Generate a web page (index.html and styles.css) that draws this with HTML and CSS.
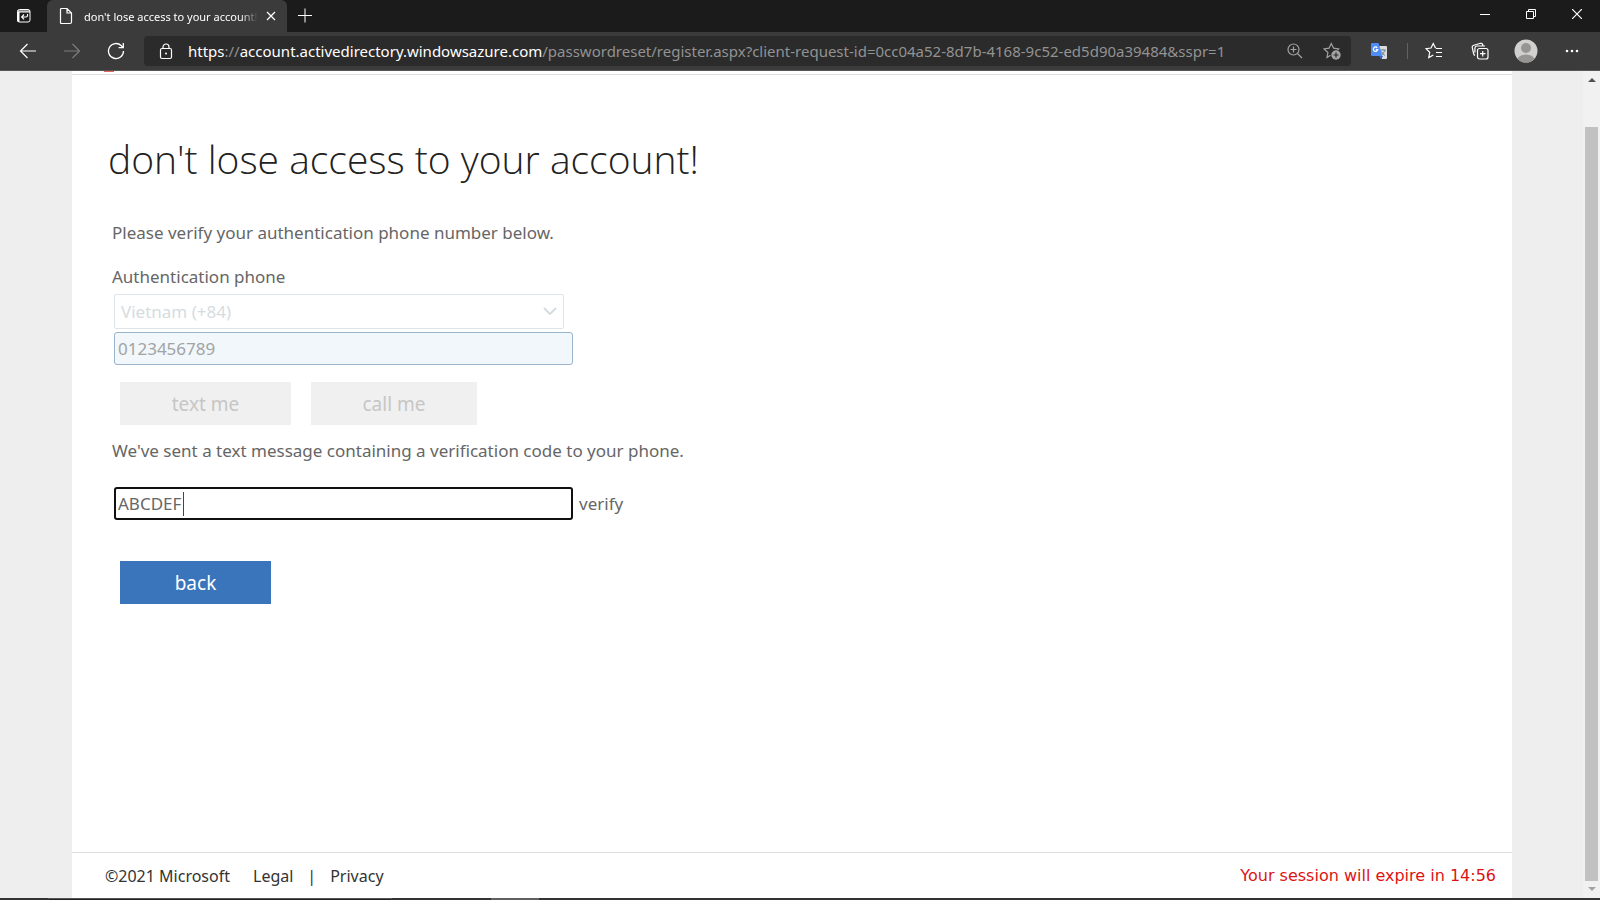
FILE: index.html
```html
<!DOCTYPE html>
<html lang="en">

<head>
    <meta charset="utf-8">
    <title>don't lose access to your account!</title>
    <meta name="viewport" content="width=device-width, initial-scale=1">
    <link rel="stylesheet" href="styles.css">
</head>

<body>
<div class="tabstrip">
    <button class="tab-menu" aria-label="Tab actions">
        <svg width="16" height="16" viewBox="0 0 16 16" fill="none" stroke="#fff">
            <rect x="1.5" y="1.5" width="12.5" height="12.5" rx="2"/>
            <path d="M1.5 3h12.500M1.500 4h12.500" stroke-width="1"/>
            <path d="M2.500 4v10" stroke-width="2"/>
            <path d="M11.500 6v1.500q0 1.500-1.500 1.500H6M8 6.500L5.700 9 8 11.300" stroke-width="1.200"/>
        </svg>
    </button>
    <div class="tab">
        <svg width="14" height="18" viewBox="0 0 14 18" fill="none" stroke="#fff" stroke-width="1.200">
            <path d="M2.500 1.500h5.500l4.500 4.500v9q0 1.500-1.500 1.500H2.500q-1 0-1-1v-13q0-1 1-1zM8 1.500V6h4.500"/>
        </svg>
        <span class="tab-title">don't lose access to your account!</span>
        <button class="tab-close" aria-label="Close tab">
            <svg width="10" height="10" viewBox="0 0 10 10" stroke="#fff" stroke-width="1.300">
                <path d="M1 1l8 8M9 1L1 9"/>
            </svg>
        </button>
    </div>
    <button class="new-tab" aria-label="New tab">
        <svg width="16" height="16" viewBox="0 0 16 16" stroke="#fff">
            <path d="M1 7.500h14M8 .5v14"/>
        </svg>
    </button>
    <div class="window-buttons">
        <button aria-label="Minimize">
            <svg width="10" height="10" viewBox="0 0 10 10" stroke="#fff"><path d="M0 5.500h10"/></svg>
        </button>
        <button aria-label="Restore">
            <svg width="10" height="10" viewBox="0 0 10 10" fill="none" stroke="#fff">
                <path d="M.5 2.500h7v7h-7zM2.500 2.500v-2h7v7h-2"/>
            </svg>
        </button>
        <button aria-label="Close">
            <svg width="10" height="10" viewBox="0 0 10 10" stroke="#fff" stroke-width="1.200"><path d="M0 0l10 10M10 0L0 10"/></svg>
        </button>
    </div>
</div>

<div class="toolbar">
    <div class="nav-buttons">
        <button aria-label="Back">
            <svg width="18" height="16" viewBox="0 0 18 16" fill="none" stroke="#fff" stroke-width="1.200">
                <path d="M17 8H1.500M8.500 1l-7 7 7 7"/>
            </svg>
        </button>
        <button aria-label="Forward" disabled>
            <svg width="18" height="16" viewBox="0 0 18 16" fill="none" stroke="#7d7d7d" stroke-width="1.200">
                <path d="M1 8h15.500M9.500 1l7 7-7 7"/>
            </svg>
        </button>
        <button aria-label="Refresh">
            <svg width="18" height="18" viewBox="0 0 18 18" fill="none" stroke="#fff" stroke-width="1.300">
                <path d="M16.500 9a7.500 7.500 0 1 1-2.200-5.300L16 5.400M16.300 1v4.700h-4.700"/>
            </svg>
        </button>
    </div>
    <div class="address">
        <svg width="14" height="17" viewBox="0 0 14 17" fill="none" stroke="#fff" stroke-width="1.200">
            <rect x="1.500" y="5.500" width="11" height="10" rx="1.500"/>
            <path d="M4 5.500V4a3 3 0 0 1 6 0v1.500"/>
            <circle cx="7" cy="10.500" r="1" fill="#fff" stroke="none"/>
        </svg>
        <span class="url"><b>https</b>://<b>account.activedirectory.windowsazure.com</b>/passwordreset/register.aspx?client-request-id=0cc04a52-8d7b-4168-9c52-ed5d90a39484&amp;sspr=1</span>
        <button aria-label="Zoom">
            <svg width="16" height="16" viewBox="0 0 16 16" fill="none" stroke="#a3a3a3" stroke-width="1.200">
                <circle cx="6.500" cy="6.500" r="5.500"/>
                <path d="M10.500 10.500L15 15M3.500 6.500h6M6.500 3.500v6"/>
            </svg>
        </button>
        <button aria-label="Add this page to favorites">
            <svg width="18" height="18" viewBox="0 0 18 18" fill="none" stroke="#a3a3a3" stroke-width="1.200">
                <path d="M7.500 13.300L4 15.500l.9-5L1 6.900l5-.7L8.300 1.500l2.300 4.700 5 .7-1.100 1.100"/>
                <circle cx="13" cy="13" r="4.700" fill="#a3a3a3" stroke="none"/>
                <path d="M10.500 13h5M13 10.500v5" stroke="#2b2b2b"/>
            </svg>
        </button>
    </div>
    <div class="extensions">
        <button aria-label="Translate">
            <svg width="16" height="17" viewBox="0 0 16 17">
                <path d="M6 3h9q1 0 1 1v11q0 1-1 1h-4z" fill="#dcdcdc"/>
                <path d="M9 7h6M12 6v1M14 7q-1 4-4.500 5.500M10.500 8.500q1 2.500 3.500 4" fill="none" stroke="#6f8790"/>
                <path d="M8 13h4l-2 3.500z" fill="#3c62bd"/>
                <path d="M1 0h6.500l4 13H1q-1 0-1-1V1q0-1 1-1z" fill="#4f8df5"/>
                <path d="M6.300 4.800A2.200 2.200 0 1 0 6.700 6.700H4.800" fill="none" stroke="#fff" stroke-width="1.200"/>
            </svg>
        </button>
        <span class="separator"></span>
        <button aria-label="Favorites">
            <svg width="18" height="18" viewBox="0 0 18 18" fill="none" stroke="#fff" stroke-width="1.200">
                <path d="M11 5.800L10.300 5.600 8.200 1.500 6 6l-5 .7 3.700 3.600-.9 5.200L8.300 13M11 6.500h6M11 10.500h6M11 14.500h6"/>
            </svg>
        </button>
        <button aria-label="Collections">
            <svg width="18" height="18" viewBox="0 0 18 18" fill="none" stroke="#fff" stroke-width="1.200">
                <rect x="6.500" y="6.500" width="10.500" height="10.500" rx="2"/>
                <path d="M9 11.700h5.500M11.700 9v5.500M4 13.500q-1-.5-1.400-2L1.200 5.300Q1 4 2.200 3.500L9.500 1.300q1.500-.3 2 1l.6 1.900M3.900 10.500V6q.1-1.900 2-2H14"/>
            </svg>
        </button>
        <button aria-label="Profile">
            <svg width="24" height="24" viewBox="0 0 24 24">
                <defs><clipPath id="avatar"><circle cx="12" cy="12" r="11.500"/></clipPath></defs>
                <g clip-path="url(#avatar)">
                    <path d="M0 0h24v24H0z" fill="#d2d0ce"/>
                    <circle cx="12" cy="9" r="5" fill="#979593"/>
                    <ellipse cx="12" cy="21" rx="8.500" ry="5.500" fill="#979593"/>
                </g>
            </svg>
        </button>
        <button aria-label="Settings and more">
            <svg width="14" height="4" viewBox="0 0 14 4" fill="#fff">
                <circle cx="2" cy="2" r="1.300"/><circle cx="7" cy="2" r="1.300"/><circle cx="12" cy="2" r="1.300"/>
            </svg>
        </button>
    </div>
</div>

<div class="viewport">
    <div class="page">
        <header><span class="logo"></span></header>
        <main>
            <h1>don't lose access to your account!</h1>
            <form>
                <p class="intro">Please verify your authentication phone number below.</p>
                <label class="phone-label" for="country">Authentication phone</label>
                <div class="select-wrap">
                    <select id="country" disabled>
                        <option>Vietnam (+84)</option>
                    </select>
                    <svg class="chevron" width="14" height="8" viewBox="0 0 14 8" fill="none" stroke="#d5dce0" stroke-width="2">
                        <path d="M1 1l6 6 6-6"/>
                    </svg>
                </div>
                <input class="phone" type="text" value="0123456789" aria-label="Phone number" disabled>
                <div class="buttons">
                    <button class="text-me" type="button" disabled>text me</button>
                    <button class="call-me" type="button" disabled>call me</button>
                </div>
                <label class="sent" for="code">We've sent a text message containing a verification code to your phone.</label>
                <div class="verify-row">
                    <div class="code-wrap">
                        <input class="code" id="code" type="text" value="ABCDEF">
                        <span class="caret"></span>
                    </div>
                    <a class="verify" href="#">verify</a>
                </div>
                <button class="back" type="button">back</button>
            </form>
        </main>
        <footer>
            <span class="copyright">©2021 Microsoft</span>
            <a href="#">Legal</a>
            <span class="bar">|</span>
            <a href="#">Privacy</a>
            <span class="session">Your session will expire in 14:56</span>
        </footer>
    </div>
    <div class="scrollbar">
        <svg width="8" height="4" viewBox="0 0 8 4" fill="#505050"><path d="M0 4l4-4 4 4z"/></svg>
        <div class="thumb"></div>
        <svg width="8" height="4" viewBox="0 0 8 4" fill="#a3a3a3"><path d="M0 0l4 4 4-4z"/></svg>
    </div>
</div>
<div class="taskbar"><span class="task"></span><span class="task-active"></span></div>
</body>

</html>
```
FILE: styles.css
```css
* {
    box-sizing: border-box;
}

body {
    margin: 0;
    height: 100vh;
    display: flex;
    flex-direction: column;
    overflow: hidden;
    font-family: "Noto Sans", "Open Sans", sans-serif;
    font-size: 17px;
    color: #666;
    background: #eee;
}

button, input, select {
    font-family: inherit;
    font-size: inherit;
    margin: 0;
}

a {
    color: inherit;
    text-decoration: none;
}

svg {
    display: block;
    flex: none;
}

/* browser chrome */
.tabstrip {
    flex: none;
    display: flex;
    height: 32px;
    background: #1b1b1b;
}

.tabstrip button, .toolbar button {
    display: flex;
    align-items: center;
    justify-content: center;
    padding: 0;
    border: 0;
    background: none;
}

.tab-menu {
    width: 47px;
}

.tab {
    width: 240px;
    padding: 0 11px 0 12px;
    display: flex;
    align-items: center;
    background: #3b3b3b;
    border-radius: 6px 6px 0 0;
}

.tab-title {
    flex: 1;
    margin: 0 8px 0 11px;
    overflow: hidden;
    white-space: nowrap;
    color: #fff;
    font-size: 11px;
    -webkit-mask-image: linear-gradient(to right, #000 90%, transparent);
    mask-image: linear-gradient(to right, #000 90%, transparent);
}

.new-tab {
    width: 36px;
}

.window-buttons {
    display: flex;
    margin-left: auto;
}

.window-buttons button {
    width: 46px;
    height: 28px;
}

.toolbar {
    flex: none;
    display: flex;
    align-items: center;
    height: 39px;
    background: #3b3b3b;
    border-bottom: 1px solid #5a5658;
}

.nav-buttons {
    display: flex;
    padding-left: 6px;
}

.nav-buttons button {
    width: 44px;
}

.address {
    flex: 1;
    min-width: 0;
    display: flex;
    align-items: center;
    height: 30px;
    margin-left: 6px;
    padding: 0 10px 0 15px;
    gap: 15px;
    background: #2b2b2b;
    border-radius: 4px;
}

.address button + button {
    margin-left: 5px;
}

.url {
    flex: 1;
    overflow: hidden;
    white-space: nowrap;
    font-size: 15px;
    color: #929292;
}

.url b {
    font-weight: normal;
    color: #fff;
}

.extensions {
    display: flex;
    align-items: center;
    padding-right: 5px;
}

.extensions button {
    width: 46px;
}

.extensions button:first-child {
    width: 56px;
}

.separator {
    width: 1px;
    height: 16px;
    margin-right: 3px;
    background: #626262;
}

/* document */
.viewport {
    flex: 1;
    min-height: 0;
    display: flex;
    padding-left: 72px;
}

.page {
    flex: 1;
    display: flex;
    flex-direction: column;
    margin-right: 71px;
    background: #fff;
}

header {
    height: 4px;
    padding-left: 32px;
    border-bottom: 1px solid #ddd;
}

.logo {
    display: block;
    width: 10px;
    height: 1px;
    background: #e8625f;
}

main {
    flex: 1;
    padding: 56px 36px 0;
}

h1 {
    margin: 0;
    font-family: "Open Sans", "Noto Sans", sans-serif;
    font-size: 39px;
    font-weight: 300;
    line-height: 56px;
    color: #222;
}

form {
    display: flex;
    flex-direction: column;
    align-items: flex-start;
    padding: 32px 4px 0;
    line-height: 28px;
}

.intro {
    margin: 0 0 16px;
}

.phone-label {
    margin-bottom: 3px;
}

.select-wrap {
    position: relative;
    width: 450px;
    margin: 0 2px 3px;
}

select {
    appearance: none;
    display: block;
    width: 100%;
    height: 35px;
    padding: 0 6px;
    border: 1px solid #dfe4e8;
    border-radius: 2px;
    background: #fff;
    color: #d5dce0;
    opacity: 1;
}

.chevron {
    position: absolute;
    right: 7px;
    top: 13px;
}

input {
    display: block;
    width: 459px;
    height: 33px;
    padding: 0 3px;
    border: 1px solid #99b4cb;
    border-radius: 3px;
    color: #666;
}

.phone {
    margin: 0 2px 17px;
    background: #f1f7fb;
    color: #a3a3a3;
}

.buttons {
    display: flex;
    gap: 20px;
    margin: 0 8px 12px;
}

.buttons button, .back {
    height: 43px;
    border: 0;
    font-size: 19px;
}

.buttons button {
    background: #f0f0f0;
    color: #c6c6c6;
}

.buttons .text-me {
    width: 171px;
}

.buttons .call-me {
    width: 166px;
}

.sent {
    margin-bottom: 22px;
}

.verify-row {
    display: flex;
    align-items: center;
    gap: 6px;
    margin: 0 2px 41px;
}

.code-wrap {
    position: relative;
}

.code {
    padding: 0 2px;
    border: 2px solid #101010;
    background: #fff;
}

.caret {
    position: absolute;
    left: 69px;
    top: 5px;
    width: 1px;
    height: 24px;
    background: #444;
}

.back {
    width: 151px;
    margin-left: 8px;
    background: #3a74ba;
    color: #fff;
}

footer {
    display: flex;
    align-items: center;
    height: 46px;
    padding: 0 16px 0 33px;
    border-top: 1px solid #ddd;
    font-size: 16px;
    color: #333;
}

.copyright {
    margin-right: 23px;
}

.bar {
    margin: 0 14px;
}

.session {
    margin-left: auto;
    font-family: "DejaVu Sans", sans-serif;
    color: #dc1414;
}

.scrollbar {
    display: flex;
    flex-direction: column;
    align-items: center;
    width: 17px;
    padding: 7px 0;
    background: #f1f1f1;
}

.thumb {
    flex: 1;
    width: 13px;
    margin: 45px 0 6px;
    background: #c1c1c1;
}

.taskbar {
    flex: none;
    display: flex;
    height: 2px;
    padding-left: 48px;
    background: #333336;
}

.task {
    width: 344px;
    border: 1px solid #555;
    border-bottom-color: #222;
}

.task-active {
    width: 48px;
    margin-left: 99px;
    background: #606062;
}
```
